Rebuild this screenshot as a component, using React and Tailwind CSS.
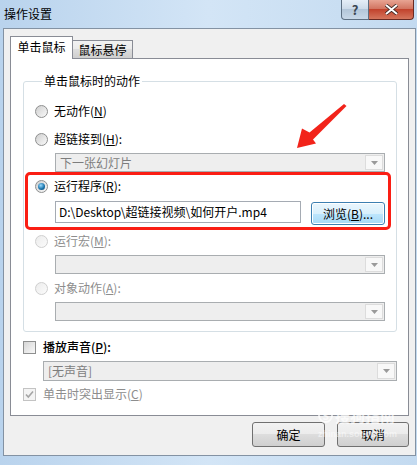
import React from 'react';

const font = "font-['Noto_Sans_CJK_SC','Noto_Sans',sans-serif]";

function Radio({ checked, disabled }) {
  return (
    <span
      className={`w-[13px] h-[13px] rounded-full border shrink-0 flex items-center justify-center ${
        disabled
          ? 'border-[#cfcfcf] bg-gradient-to-br from-[#ececec] to-[#fbfbfb]'
          : 'border-[#8e8f8f] bg-gradient-to-br from-[#cfcfcf] to-[#fafafa]'
      }`}
    >
      {checked && (
        <span className="w-[7px] h-[7px] rounded-full bg-[radial-gradient(circle_at_40%_35%,#9adbff,#1d76ad_55%,#0a3a63)]" />
      )}
    </span>
  );
}

function Check({ checked, disabled }) {
  return (
    <span
      className={`w-[13px] h-[13px] border shrink-0 flex items-center justify-center ${
        disabled ? 'border-[#c3c3c3] bg-[#f4f4f4]' : 'border-[#8e8f8f] bg-gradient-to-br from-[#d6d6d6] to-[#f8f8f8]'
      }`}
    >
      {checked && (
        <svg width="9" height="9" viewBox="0 0 9 9">
          <path d="M1 4.5l2.3 2.5L8 1.5" stroke="#a5a5a5" strokeWidth="1.6" fill="none" />
        </svg>
      )}
    </span>
  );
}

function Combo({ text, className }) {
  return (
    <div className={`flex border border-[#a9adb0] bg-[#eeeeee] ${className}`}>
      <span className="flex-1 pl-[4px] text-[#7d7d7d] leading-[17px]">{text}</span>
      <span className="w-[18px] my-px mr-px border border-[#dcdcdc] bg-[#f8f8f8] flex items-center justify-center">
        <svg width="7" height="4" viewBox="0 0 7 4">
          <path d="M0 0h7L3.5 4z" fill="#9a9a9a" />
        </svg>
      </span>
    </div>
  );
}

function Row({ children, disabled, className }) {
  return (
    <div className={`flex items-center h-[16px] ${disabled ? 'text-[#8d8d8d]' : 'text-black'} ${className}`}>
      {children}
    </div>
  );
}

function WinButton({ children, className }) {
  return (
    <button
      className={`h-[25px] rounded-[3px] border border-[#707070] bg-[linear-gradient(#f2f2f2,#ebebeb_50%,#dddddd_50%,#cfcfcf)] text-black text-[12px] leading-none ${className}`}
    >
      {children}
    </button>
  );
}

export default function App() {
  return (
    <div className={`relative w-[417px] h-[465px] overflow-hidden flex flex-col bg-gradient-to-r from-[#b9d3ed] via-[#d3e5f6] to-[#c3daf0] text-[12px] ${font}`}>
      {/* title bar */}
      <div className="h-[28px] flex shrink-0">
        <span className="pl-[4px] pt-[5px] text-black leading-[18px]">操作设置</span>
        <div className="ml-auto mr-[3px] flex self-start">
          <span className="w-[28px] h-[20px] rounded-bl-[4px] border border-t-0 border-[#5d6f82] bg-[linear-gradient(#e5eef7,#cbd9e8_50%,#b3c6d9_50%,#c8d8e8)] flex items-center justify-center text-[#3b4652] font-bold text-[13px] leading-none">
            ?
          </span>
          <span className="w-[45px] h-[20px] rounded-br-[4px] border border-t-0 border-l-0 border-[#6a2a22] bg-[linear-gradient(#e8a493,#d0705c_50%,#c2432d_50%,#d5765d)] flex items-center justify-center">
            <svg width="13" height="11" viewBox="0 0 13 11">
              <path d="M1 1l11 9M12 1L1 10" stroke="#3a2420" strokeWidth="3.6" />
              <path d="M1 1l11 9M12 1L1 10" stroke="#ffffff" strokeWidth="2" />
            </svg>
          </span>
        </div>
      </div>

      {/* client area */}
      <div className="ml-[3px] mr-px h-[428px] border border-[#8392a3] bg-[#f0f0f0] flex flex-col">
        {/* tabs */}
        <div className="flex items-end pt-[7px] pl-[6px]">
          <div className="relative z-10 h-[23px] -mb-px w-[63px] border border-b-0 border-[#898c95] bg-white flex items-start justify-center pt-[2px] text-black leading-[16px]">
            单击鼠标
          </div>
          <div className="h-[18px] w-[60px] border border-l-0 border-b-0 border-[#898c95] bg-[linear-gradient(#f2f2f2,#ebebeb_50%,#dddddd_50%,#cfcfcf)] flex items-center justify-center text-black leading-[16px]">
            鼠标悬停
          </div>
        </div>

        {/* tab panel */}
        <div className="ml-[6px] mr-[6px] h-[358px] border border-[#898c95] bg-white flex flex-col">
          <fieldset className="mt-[14px] ml-[12px] w-[374px] border border-[#d5dfe5] rounded-[3px] pl-[11px] pb-[10px]">
            <legend className="ml-[7px] px-[2px] leading-[16px] text-black">单击鼠标时的动作</legend>

            <Row className="mt-[14px] gap-[6px]">
              <Radio />
              <span>无动作(<u>N</u>)</span>
            </Row>
            <Row className="mt-[12px] gap-[6px]">
              <Radio />
              <span>超链接到(<u>H</u>):</span>
            </Row>
            <Combo text="下一张幻灯片" className="mt-[6px] ml-[20px] w-[330px] h-[19px]" />

            <Row className="mt-[6px] gap-[6px]">
              <Radio checked />
              <span>运行程序(<u>R</u>):</span>
            </Row>
            <div className="mt-[5px] ml-[20px] flex items-center">
              <div className="w-[246px] h-[22px] border border-[#a5abb3] bg-white pl-[3px] leading-[20px] text-black whitespace-nowrap overflow-hidden">
                D:\Desktop\超链接视频\如何开户.mp4
              </div>
              <button className="ml-[10px] mt-[3px] w-[74px] h-[23px] rounded-[3px] border border-[#3c7fb1] bg-[linear-gradient(#eaf6fd,#d9f0fc_50%,#bee6fd_50%,#a7d9f5)] shadow-[inset_0_0_0_1px_#ffffff] text-black text-[12px] leading-none">
                浏览(<u>B</u>)...
              </button>
            </div>

            <Row disabled className="mt-[8px] gap-[6px]">
              <Radio disabled />
              <span>运行宏(<u>M</u>):</span>
            </Row>
            <Combo className="mt-[6px] ml-[20px] w-[330px] h-[19px]" />

            <Row disabled className="mt-[6px] gap-[6px]">
              <Radio disabled />
              <span>对象动作(<u>A</u>):</span>
            </Row>
            <Combo className="mt-[6px] ml-[20px] w-[330px] h-[19px]" />
          </fieldset>

          <Row className="mt-[7px] ml-[12px] gap-[7px]">
            <Check />
            <span className="font-medium">播放声音(<u>P</u>):</span>
          </Row>
          <Combo text="[无声音]" className="mt-[6px] ml-[32px] w-[354px] h-[20px]" />
          <Row disabled className="mt-[5px] ml-[12px] gap-[7px]">
            <Check checked disabled />
            <span>单击时突出显示(<u>C</u>)</span>
          </Row>
        </div>

        {/* dialog buttons */}
        <div className="flex justify-end gap-[12px] mt-[6px] mr-[6px]">
          <WinButton className="w-[73px]">确定</WinButton>
          <WinButton className="w-[72px]">取消</WinButton>
        </div>
      </div>

      {/* red highlight box */}
      <div className="absolute left-[25px] top-[172px] w-[366px] h-[58px] border-[3px] border-[#fa1e14] rounded-[5px] pointer-events-none" />

      {/* red arrow */}
      <svg className="absolute left-[290px] top-[100px]" width="60" height="52" viewBox="0 0 60 52">
        <polygon points="54,4 56.5,6 23,39.5 26,43.5 7,48 12,28.5 19.5,32.5" fill="#f2231a" />
      </svg>

      {/* watermark */}
      <div className="absolute left-[318px] top-[408px] flex items-center gap-[2px] text-white/70 pointer-events-none">
        <span className="w-[15px] h-[15px] rounded-full border-2 border-white/70 flex items-center justify-center text-[10px] font-bold leading-none">S</span>
        <span className="text-[15px] font-bold leading-none">搜狗指南</span>
      </div>
      <div className="absolute left-[318px] top-[430px] text-white/50 text-[9px] leading-none font-bold pointer-events-none font-['Liberation_Sans',sans-serif]">
        zhinan.sogou.com
      </div>
    </div>
  );
}
